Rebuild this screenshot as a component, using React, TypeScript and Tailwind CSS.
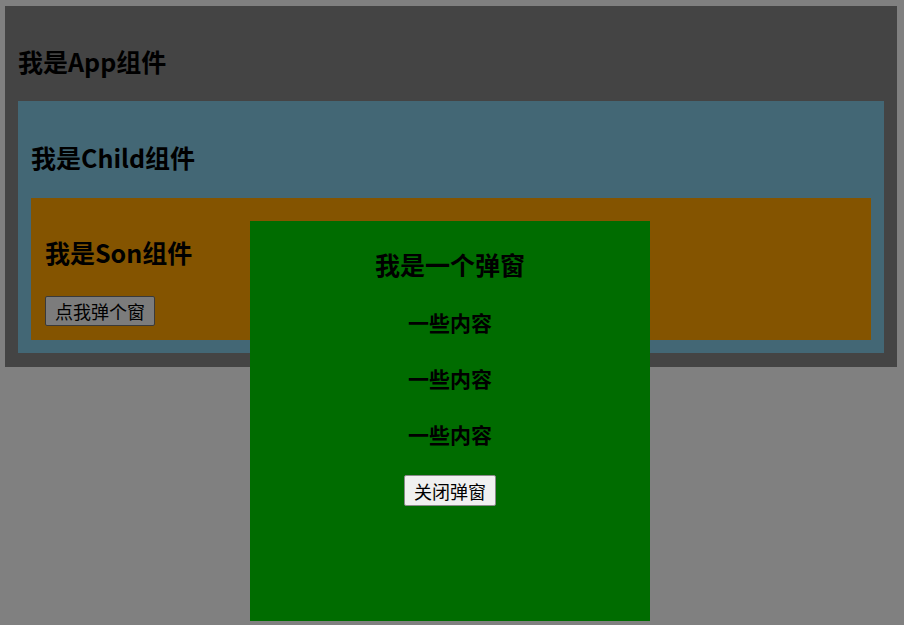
import { useState } from "react";

const font = { fontFamily: '"Noto Sans CJK SC", "Noto Sans", sans-serif' };

function Modal({ onClose }: { onClose: () => void }) {
  return (
    <div className="absolute left-[250px] top-[221px] w-[400px] h-[400px] bg-[#006c00] text-center text-black">
      <h2 className="mt-[27px] mb-[28px] text-[25px] leading-[32px] font-bold">我是一个弹窗</h2>
      <p className="text-[21px] leading-[28px] font-bold mb-[28px]">一些内容</p>
      <p className="text-[21px] leading-[28px] font-bold mb-[28px]">一些内容</p>
      <p className="text-[21px] leading-[28px] font-bold mb-[27px]">一些内容</p>
      <button
        onClick={onClose}
        className="h-[31px] px-[9px] text-[18px] leading-none bg-[#f0f0f0] border border-[#8a8a8a] rounded-[2px]"
      >
        关闭弹窗
      </button>
    </div>
  );
}

export default function App() {
  const [open, setOpen] = useState(true);

  return (
    <div className="relative w-[904px] h-[625px] bg-[#808080] overflow-hidden pt-[6px] px-[5px] text-black" style={font}>
      <div className="bg-[#444444] px-[13px] pt-[13px] pb-[14px] w-[892px]">
        <h2 className="mt-[26px] mb-[24px] text-[25px] leading-[32px] font-bold">我是App组件</h2>
        <div className="bg-[#436775] p-[13px]">
          <h2 className="mt-[27px] mb-[25px] text-[25px] leading-[32px] font-bold">我是Child组件</h2>
          <div className="bg-[#845400] px-[14px] pt-[11px] pb-[14px]">
            <h2 className="mt-[27px] mb-[28px] text-[25px] leading-[32px] font-bold">我是Son组件</h2>
            <button
              onClick={() => setOpen(true)}
              className="h-[30px] w-[110px] text-[18px] leading-none bg-[#7c7c7c] border border-[#3a3a3a] rounded-[2px]"
            >
              点我弹个窗
            </button>
          </div>
        </div>
      </div>
      {open && <Modal onClose={() => setOpen(false)} />}
    </div>
  );
}
